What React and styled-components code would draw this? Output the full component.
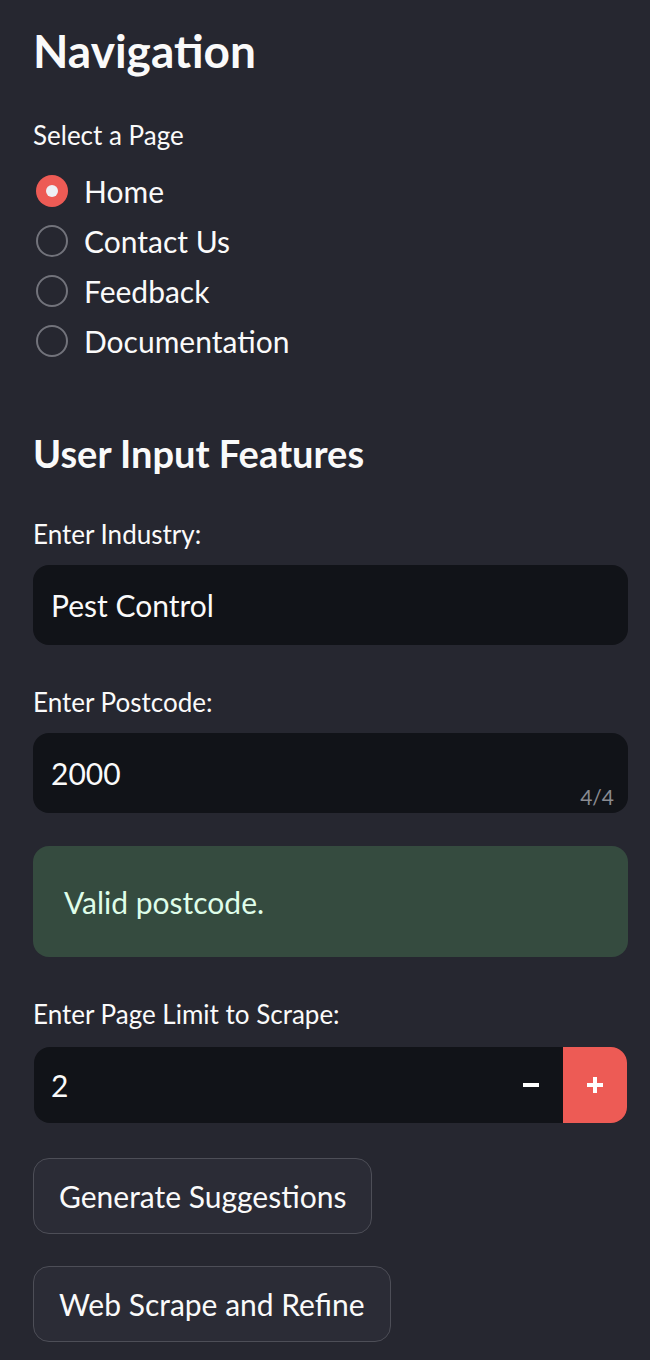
import React, { useState } from 'react';
import styled, { createGlobalStyle } from 'styled-components';

const GlobalStyle = createGlobalStyle`
  html, body {
    margin: 0;
    padding: 0;
    background: #262730;
  }
  body {
    font-family: Lato, "Noto Sans", sans-serif;
    color: #fafafa;
  }
`;

const pages = ['Home', 'Contact Us', 'Feedback', 'Documentation'];

const App = () => {
  const [page, setPage] = useState('Home');
  const [industry, setIndustry] = useState('Pest Control');
  const [postcode, setPostcode] = useState('2000');
  const [limit, setLimit] = useState(2);

  return (
    <Sidebar>
      <GlobalStyle />
      <Title>Navigation</Title>
      <Label>Select a Page</Label>
      <RadioGroup>
        {pages.map((p) => (
          <RadioRow key={p} onClick={() => setPage(p)}>
            <RadioDot checked={page === p} />
            <RadioText>{p}</RadioText>
          </RadioRow>
        ))}
      </RadioGroup>

      <Header>User Input Features</Header>

      <Label>Enter Industry:</Label>
      <InputBox>
        <TextInput value={industry} onChange={(e) => setIndustry(e.target.value)} />
      </InputBox>

      <Label $gap={7}>Enter Postcode:</Label>
      <InputBox>
        <TextInput
          value={postcode}
          maxLength={4}
          onChange={(e) => setPostcode(e.target.value)}
        />
        <Counter>{postcode.length}/4</Counter>
      </InputBox>

      <Success>Valid postcode.</Success>

      <Label>Enter Page Limit to Scrape:</Label>
      <NumberBox>
        <NumberValue>{limit}</NumberValue>
        <StepButton onClick={() => setLimit(Math.max(1, limit - 1))}>
          <MinusBar />
        </StepButton>
        <StepButton $active onClick={() => setLimit(limit + 1)}>
          <PlusMark />
        </StepButton>
      </NumberBox>

      <ActionButton>Generate Suggestions</ActionButton>
      <ActionButton>Web Scrape and Refine</ActionButton>
    </Sidebar>
  );
};

const Sidebar = styled.div`
  width: 650px;
  min-height: 1360px;
  box-sizing: border-box;
  padding: 21px 22px 0 33px;
  background: #262730;
  display: flex;
  flex-direction: column;
  align-items: flex-start;
`;

const Title = styled.h1`
  margin: 0 0 37px;
  font-size: 46px;
  line-height: 60px;
  font-weight: 700;
`;

const Header = styled.h2`
  margin: 63px 0 40px;
  font-size: 38px;
  line-height: 48px;
  font-weight: 700;
`;

const Label = styled.div`
  font-size: 26px;
  line-height: 34px;
  margin-top: ${({ $gap }) => $gap || 0}px;
  margin-bottom: 14px;
`;

const RadioGroup = styled.div`
  display: flex;
  flex-direction: column;
`;

const RadioRow = styled.div`
  height: 50px;
  display: flex;
  align-items: center;
  gap: 16px;
  cursor: pointer;
`;

const RadioDot = styled.span`
  width: 32px;
  height: 32px;
  box-sizing: border-box;
  border-radius: 50%;
  margin-left: 3px;
  border: ${({ checked }) => (checked ? 'none' : '2px solid #72737b')};
  background: ${({ checked }) => (checked ? '#ed5b55' : 'transparent')};
  display: flex;
  align-items: center;
  justify-content: center;
  &::after {
    content: '';
    display: ${({ checked }) => (checked ? 'block' : 'none')};
    width: 12px;
    height: 12px;
    border-radius: 50%;
    background: #eef0f5;
  }
`;

const RadioText = styled.span`
  font-size: 30px;
`;

const InputBox = styled.div`
  position: relative;
  width: 100%;
  height: 80px;
  box-sizing: border-box;
  border-radius: 16px;
  background: #111318;
  margin-bottom: 33px;
`;

const TextInput = styled.input`
  width: 100%;
  height: 100%;
  box-sizing: border-box;
  border: none;
  outline: none;
  background: transparent;
  padding: 0 18px;
  color: #fafafa;
  font-family: inherit;
  font-size: 30px;
`;

const Counter = styled.span`
  position: absolute;
  right: 14px;
  bottom: 4px;
  font-size: 21px;
  color: #8a8b91;
`;

const Success = styled.div`
  width: 100%;
  height: 111px;
  box-sizing: border-box;
  display: flex;
  align-items: center;
  padding: 0 31px;
  border-radius: 16px;
  background: #354b3f;
  color: #dffde9;
  font-size: 30px;
  margin-bottom: 40px;
`;

const NumberBox = styled.div`
  width: calc(100% - 2px);
  margin: 2px 0 35px 1px;
  height: 76px;
  display: flex;
  border-radius: 16px;
  overflow: hidden;
  background: #111318;
`;

const NumberValue = styled.div`
  flex: 1;
  display: flex;
  align-items: center;
  padding-left: 17px;
  font-size: 30px;
`;

const StepButton = styled.button`
  width: 64px;
  border: none;
  padding: 0;
  display: flex;
  align-items: center;
  justify-content: center;
  background: ${({ $active }) => ($active ? '#ed5b55' : 'transparent')};
  cursor: pointer;
`;

const MinusBar = styled.span`
  width: 16px;
  height: 4px;
  background: #ffffff;
`;

const PlusMark = styled.span`
  position: relative;
  width: 16px;
  height: 16px;
  &::before,
  &::after {
    content: '';
    position: absolute;
    background: #ffffff;
  }
  &::before {
    left: 0;
    top: 6px;
    width: 16px;
    height: 4px;
  }
  &::after {
    left: 6px;
    top: 0;
    width: 4px;
    height: 16px;
  }
`;

const ActionButton = styled.button`
  height: 76px;
  box-sizing: border-box;
  padding: 0 25px;
  border: 1px solid #4d4e57;
  border-radius: 16px;
  background: #2b2c36;
  color: #fafafa;
  font-family: inherit;
  font-size: 30px;
  margin-bottom: 32px;
  cursor: pointer;
`;

export default App;
